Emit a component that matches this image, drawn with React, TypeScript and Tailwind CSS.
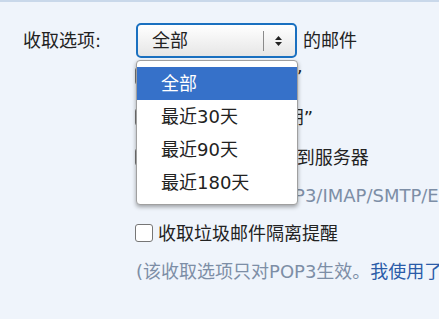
import React from 'react';

const options = ['全部', '最近30天', '最近90天', '最近180天'];

function Checkbox() {
  return <span className="w-[18px] h-[18px] shrink-0 rounded-[3px] border border-[#767676] bg-white" />;
}

export default function App() {
  return (
    <div
      className="w-[439px] h-[319px] overflow-hidden bg-[#eff4fb] text-[18px] text-[#222]"
      style={{ fontFamily: '"DejaVu Sans", "Noto Sans CJK SC", sans-serif' }}
    >
      <div className="h-[2px] bg-[#c9d8ea]" />
      <div className="flex pl-[23px] pt-[21px]">
        <div className="w-[113px] shrink-0 h-[35px] flex items-center">收取选项:</div>
        <div className="flex-1 min-w-0">
          <div className="flex items-center h-[35px] whitespace-nowrap">
            <div className="relative">
              <div className="w-[161px] h-[35px] rounded-[5px] border-2 border-[#1a70c0] bg-gradient-to-b from-white to-[#e6e6e6] flex items-center pl-[14px]">
                <span className="flex-1">全部</span>
                <span className="w-px h-[20px] bg-[#8a8a8a]" />
                <svg width="9" height="12" viewBox="0 0 9 12" className="ml-[10px] mr-[12px]">
                  <path d="M4.5 1 L8 5 L1 5 Z" fill="#222" />
                  <path d="M4.5 11 L8 7 L1 7 Z" fill="#222" />
                </svg>
              </div>
              <div className="absolute z-10 left-0 top-[37px] w-[162px] h-[145px] pt-[6px] rounded-[4px] border border-[#a0a0a0] bg-white shadow-[0_2px_4px_rgba(0,0,0,0.35)]">
                {options.map((o, i) => (
                  <div
                    key={o}
                    className={
                      'h-[33px] flex items-center pl-[24px] ' +
                      (i === 0 ? 'bg-[#3671c9] text-white' : 'text-[#222]')
                    }
                  >
                    {o}
                  </div>
                ))}
              </div>
            </div>
            <span className="ml-[6px]">的邮件</span>
          </div>
          <div className="flex items-center gap-[5px] h-[24px] mt-[6px] -ml-px whitespace-nowrap">
            <Checkbox />
            <span>收取“我的文件夹”</span>
          </div>
          <div className="flex items-center gap-[5px] h-[24px] mt-[17px] -ml-px whitespace-nowrap">
            <Checkbox />
            <span>收取“QQ邮件日期”</span>
          </div>
          <div className="flex items-center gap-[5px] h-[24px] mt-[16px] -ml-px whitespace-nowrap">
            <Checkbox />
            <span>SMTP发信后保存到服务器</span>
          </div>
          <div className="h-[24px] mt-[14px] flex items-center whitespace-nowrap text-[#7d8ea6]">
            (以下选项适用于POP3/IMAP/SMTP/Exchange服务)
          </div>
          <div className="flex items-center gap-[5px] h-[24px] mt-[14px] -ml-px whitespace-nowrap">
            <Checkbox />
            <span>收取垃圾邮件隔离提醒</span>
          </div>
          <div className="h-[24px] mt-[14px] flex items-center whitespace-nowrap text-[#7d8ea6]">
            (该收取选项只对POP3生效。<span className="text-[#2a5ba8]">我使用了哪些收信软件？</span>
          </div>
        </div>
      </div>
    </div>
  );
}
